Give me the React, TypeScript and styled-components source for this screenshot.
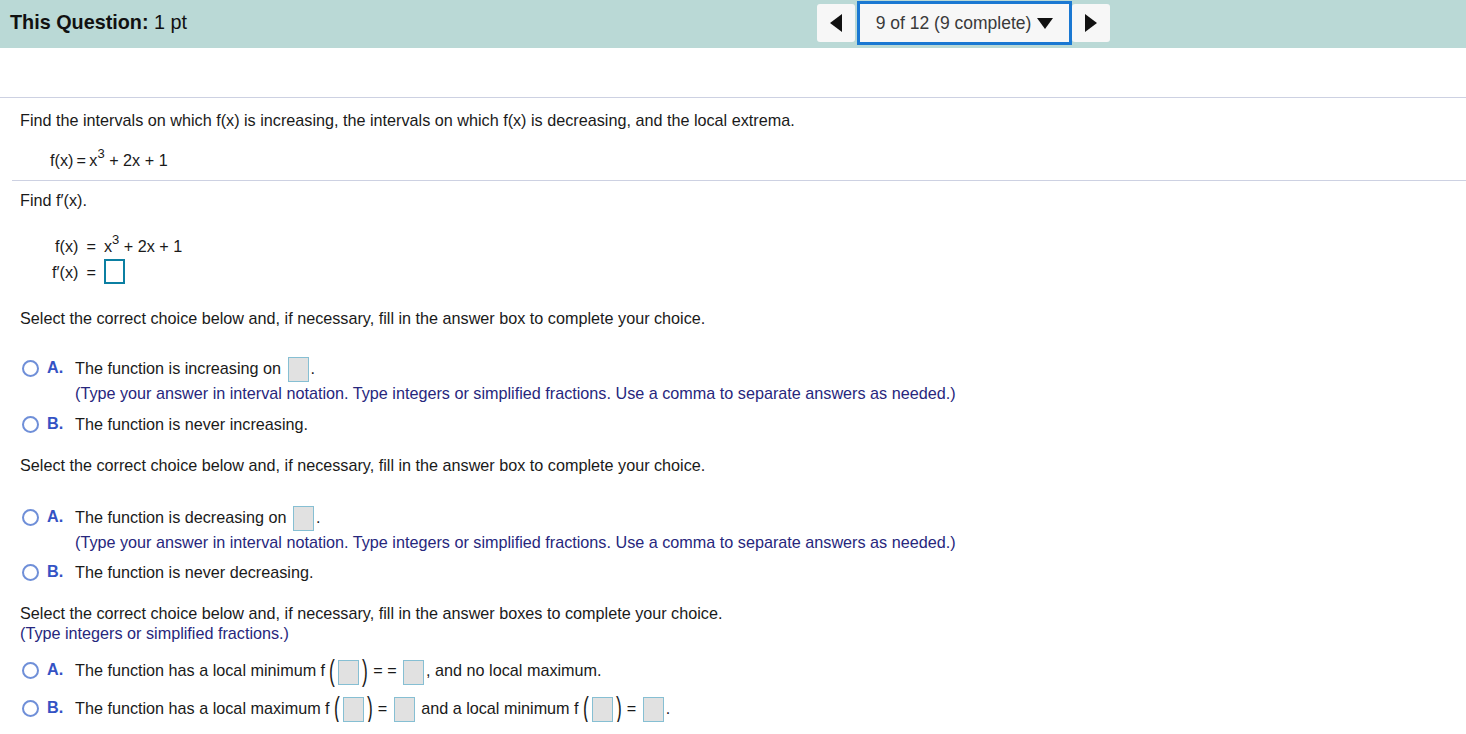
import React from "react";
import styled, { createGlobalStyle } from "styled-components";

const Global = createGlobalStyle`
  html, body { margin: 0; padding: 0; background: #fff; }
  body { font-family: "Liberation Sans", Arial, sans-serif; color: #1a1a1a; }
`;

const Header = styled.div`
  height: 48px;
  background: #bad9d6;
  display: grid;
  grid-template-columns: 817px auto 1fr;
  align-items: center;
`;

const Title = styled.div`
  padding-left: 10px;
  font-size: 19.8px;
  color: #111;
  margin-top: -3px;
  b { font-weight: bold; }
`;

const Nav = styled.div`
  display: flex;
  align-items: center;
  height: 38px;
  margin-top: -2px;
`;

const ArrowBtn = styled.div`
  width: 38px;
  height: 38px;
  background: #f7f7f7;
  border-radius: 3px;
  display: flex;
  align-items: center;
  justify-content: center;
`;

const Dropdown = styled.div`
  box-sizing: border-box;
  width: 215px;
  height: 44px;
  margin: 0 0 0 2px;
  border: 3px solid #1a78d2;
  background: #f7f7f7;
  display: flex;
  align-items: center;
  justify-content: center;
  gap: 6px;
  font-size: 17.5px;
  color: #3a3a3a;
`;

const Spacer = styled.div`
  height: 49px;
  border-bottom: 1px solid #cdd1e2;
`;

const Content = styled.div`
  font-size: 16.2px;
  line-height: 18px;
`;

const Para = styled.div<{ $top: number; $left?: number }>`
  margin-top: ${(p) => p.$top}px;
  padding-left: ${(p) => p.$left ?? 20}px;
`;

const Divider = styled.div`
  margin: 11px 0 0 12px;
  border-top: 1px solid #cdd1e2;
`;

const Hint = styled.div<{ $top?: number }>`
  color: #27277d;
  margin-top: ${(p) => p.$top ?? 0}px;
`;

const Sup = styled.sup`
  font-size: 13px;
  line-height: 0;
  position: relative;
  top: -2px;
`;

const EqGrid = styled.div`
  margin-top: 28px;
  padding-left: 52px;
  display: grid;
  grid-template-columns: auto auto 1fr;
  column-gap: 8px;
  row-gap: 4px;
  align-items: center;
`;

const EqLeft = styled.div`
  text-align: right;
`;

const AnswerBox = styled.span`
  display: inline-block;
  box-sizing: border-box;
  width: 21px;
  height: 25px;
  border: 2px solid #0b7fa2;
  background: #fff;
  vertical-align: middle;
`;

const GrayBox = styled.span`
  display: inline-block;
  box-sizing: border-box;
  width: 21px;
  height: 25px;
  border: 1px solid #86bfd3;
  background: #e1e1e1;
  vertical-align: middle;
  margin: 0 2px;
`;

const Paren = styled.span`
  display: inline-block;
  font-size: 29px;
  font-weight: 300;
  line-height: 24px;
  vertical-align: middle;
  transform: scaleX(0.6);
  margin: -3px -1px 0;
`;

const Choice = styled.div<{ $top: number }>`
  display: grid;
  grid-template-columns: 18px 28px 1fr;
  column-gap: 1px;
  margin-top: ${(p) => p.$top}px;
  padding-left: 22px;
  align-items: start;
`;

const Radio = styled.span`
  box-sizing: border-box;
  width: 17px;
  height: 17px;
  border-radius: 50%;
  border: 2px solid #6f8fd8;
  margin-top: 0px;
`;

const Letter = styled.span`
  font-weight: bold;
  color: #3452c4;
  padding-left: 6px;
  margin-top: -2px;
`;

const ChoiceText = styled.div`
  padding-left: 5px;
  line-height: 25px;
  margin-top: -4px;
`;

function Triangle({ dir }: { dir: "left" | "right" | "down" }) {
  if (dir === "down")
    return (
      <svg width="16" height="12" viewBox="0 0 16 12">
        <path d="M0 1 L16 1 L8 12 Z" fill="#111" />
      </svg>
    );
  return (
    <svg width="12" height="18" viewBox="0 0 12 18">
      {dir === "left" ? (
        <path d="M12 0 L12 18 L0 9 Z" fill="#111" />
      ) : (
        <path d="M0 0 L0 18 L12 9 Z" fill="#111" />
      )}
    </svg>
  );
}

export default function App() {
  return (
    <>
      <Global />
      <Header>
        <Title>
          <b>This Question:</b> 1 pt
        </Title>
        <Nav>
          <ArrowBtn>
            <Triangle dir="left" />
          </ArrowBtn>
          <Dropdown>
            9 of 12 (9 complete) <Triangle dir="down" />
          </Dropdown>
          <ArrowBtn>
            <Triangle dir="right" />
          </ArrowBtn>
        </Nav>
      </Header>
      <Spacer />
      <Content>
        <Para $top={13}>
          Find the intervals on which f(x) is increasing, the intervals on which f(x) is decreasing, and the local extrema.
        </Para>
        <Para $top={22} $left={50}>
          f(x)&thinsp;=&thinsp;x<Sup>3</Sup> + 2x + 1
        </Para>
        <Divider />
        <Para $top={10}>Find f′(x).</Para>
        <EqGrid>
          <EqLeft>f(x)</EqLeft>
          <span>=</span>
          <span>
            x<Sup>3</Sup> + 2x + 1
          </span>
          <EqLeft>f′(x)</EqLeft>
          <span>=</span>
          <span>
            <AnswerBox />
          </span>
        </EqGrid>
        <Para $top={25}>Select the correct choice below and, if necessary, fill in the answer box to complete your choice.</Para>
        <Choice $top={33}>
          <Radio />
          <Letter>A.</Letter>
          <ChoiceText>
            The function is increasing on <GrayBox />.
            <Hint $top={-1}>(Type your answer in interval notation. Type integers or simplified fractions. Use a comma to separate answers as needed.)</Hint>
          </ChoiceText>
        </Choice>
        <Choice $top={10}>
          <Radio />
          <Letter>B.</Letter>
          <ChoiceText>The function is never increasing.</ChoiceText>
        </Choice>
        <Para $top={19}>Select the correct choice below and, if necessary, fill in the answer box to complete your choice.</Para>
        <Choice $top={35}>
          <Radio />
          <Letter>A.</Letter>
          <ChoiceText>
            The function is decreasing on <GrayBox />.
            <Hint $top={-1}>(Type your answer in interval notation. Type integers or simplified fractions. Use a comma to separate answers as needed.)</Hint>
          </ChoiceText>
        </Choice>
        <Choice $top={9}>
          <Radio />
          <Letter>B.</Letter>
          <ChoiceText>The function is never decreasing.</ChoiceText>
        </Choice>
        <Para $top={19}>
          Select the correct choice below and, if necessary, fill in the answer boxes to complete your choice.
          <Hint $top={2}>(Type integers or simplified fractions.)</Hint>
        </Para>
        <Choice $top={20}>
          <Radio />
          <Letter>A.</Letter>
          <ChoiceText>
            The function has a local minimum f&thinsp;<Paren>(</Paren>
            <GrayBox />
            <Paren>)</Paren> = = <GrayBox />, and no local maximum.
          </ChoiceText>
        </Choice>
        <Choice $top={15}>
          <Radio />
          <Letter>B.</Letter>
          <ChoiceText>
            The function has a local maximum f&thinsp;<Paren>(</Paren>
            <GrayBox />
            <Paren>)</Paren> = <GrayBox /> and a local minimum f&thinsp;<Paren>(</Paren>
            <GrayBox />
            <Paren>)</Paren> = <GrayBox />.
          </ChoiceText>
        </Choice>
      </Content>
    </>
  );
}
